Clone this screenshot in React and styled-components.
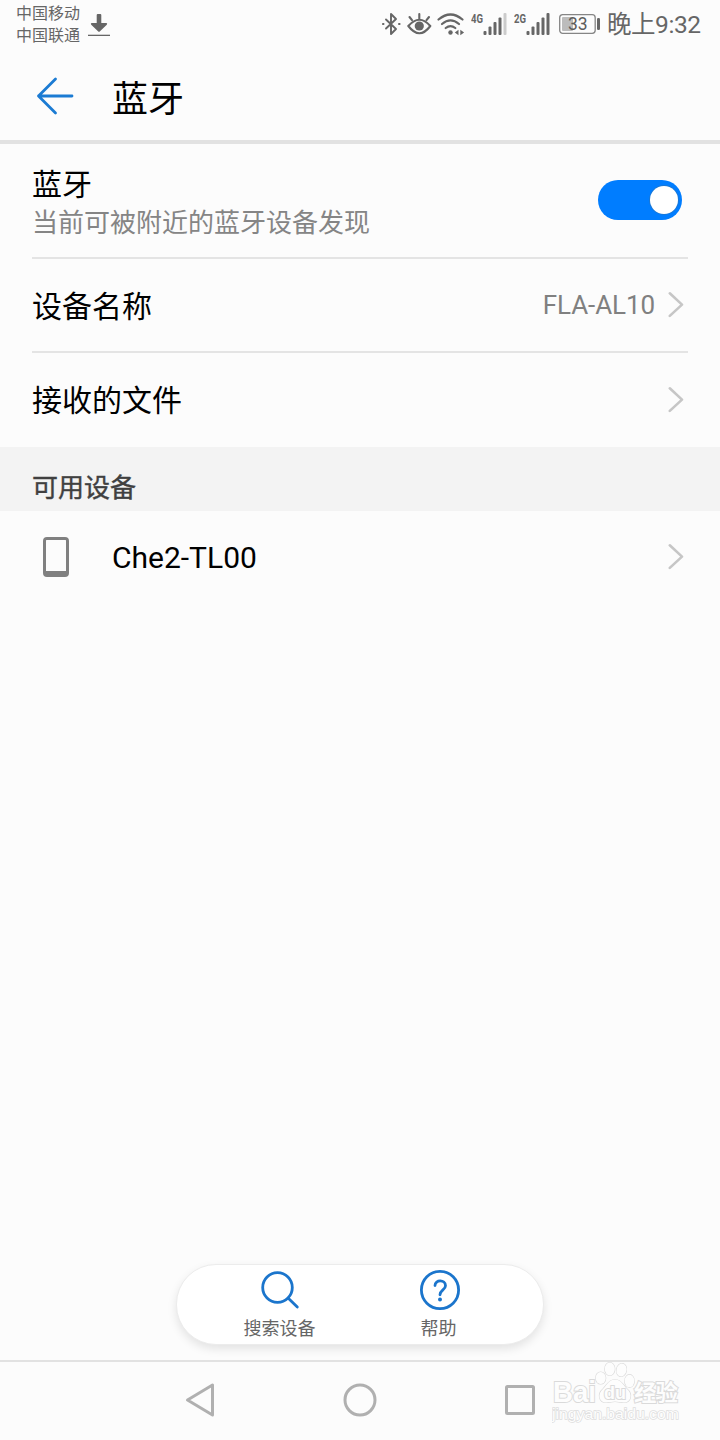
import styled, { createGlobalStyle } from "styled-components";

const GlobalStyle = createGlobalStyle`
  * {
    box-sizing: border-box;
  }
  body {
    margin: 0;
    background: #fcfcfc;
    font-family: Roboto, "Noto Sans CJK SC", sans-serif;
    color: #000;
  }
  svg {
    display: block;
    flex: none;
  }
`;

const Screen = styled.div`
  width: 720px;
  height: 1440px;
  display: flex;
  flex-direction: column;
  overflow: hidden;
  position: relative;
`;

const StatusBar = styled.div`
  height: 48px;
  padding-left: 16px;
  display: flex;
  align-items: center;
  color: #666;
`;

const Carriers = styled.div`
  width: 64px;
  margin-right: 8px;
  padding-top: 2px;
  font-size: 16px;
  line-height: 22px;
  white-space: nowrap;
`;

const StatusIcons = styled.div`
  width: 338px;
  margin-left: auto;
  display: flex;
  align-items: center;
`;

const Gap = styled.span`
  flex: none;
  width: ${(p) => p.$w}px;
`;

const Clock = styled.span`
  margin-left: 6px;
  padding-top: 2px;
  font-size: 24.5px;
  letter-spacing: -0.45px;
  line-height: 30px;
  white-space: nowrap;
`;

const Header = styled.header`
  height: 96px;
  padding: 4px 0 0 36px;
  border-bottom: 4px solid #e2e2e2;
  display: flex;
  align-items: center;
`;

const Title = styled.h1`
  margin: 8px 0 0 38px;
  font-size: 36px;
  font-weight: 400;
  line-height: 44px;
`;

const List = styled.div`
  padding: 0 32px;
`;

const Row = styled.div`
  height: ${(p) => p.$height || 94}px;
  border-bottom: ${(p) => (p.$last ? "none" : "2px solid #e4e4e4")};
  display: flex;
  align-items: center;
`;

const RowText = styled.div`
  flex: 1;
  padding-top: ${(p) => p.$top ?? 3}px;
  display: flex;
  flex-direction: column;
`;

const Label = styled.span`
  font-size: 30px;
  line-height: 38px;
`;

const Hint = styled.span`
  font-size: 26px;
  line-height: 38px;
  color: #858585;
`;

const Value = styled.span`
  margin-right: 13px;
  font-size: 26px;
  line-height: 32px;
  letter-spacing: -0.1px;
  color: #808080;
`;

const Switch = styled.div`
  width: 84px;
  height: 40px;
  margin: 0 6px 2px 0;
  padding: 0 4px;
  border-radius: 20px;
  background: #007dff;
  display: flex;
  align-items: center;
  justify-content: flex-end;
`;

const Knob = styled.span`
  width: 28px;
  height: 28px;
  border-radius: 50%;
  background: #fff;
  box-shadow: 0 0 0 1px #1a78d6;
`;

const SectionTitle = styled.h2`
  height: 64px;
  margin: 0;
  padding: 17px 32px 0;
  background: #f3f3f3;
  color: #404040;
  font-size: 26px;
  font-weight: 400;
  -webkit-text-stroke: 0.4px #404040;
  line-height: 48px;
`;

const DeviceIcon = styled.div`
  width: 80px;
  padding-left: 10px;
`;

const Toolbar = styled.div`
  width: 368px;
  height: 81px;
  margin: auto auto 15px;
  padding: 0 25px 0 23px;
  border-radius: 40px;
  border: 1px solid #ececec;
  background: #fff;
  box-shadow: 0 4px 10px rgba(0, 0, 0, 0.1);
  display: flex;
`;

const Tool = styled.div`
  flex: 1;
  padding-top: 5px;
  display: flex;
  flex-direction: column;
  align-items: center;
  font-size: 18px;
  line-height: 26px;
  color: #666;

  svg {
    margin-bottom: 6px;
  }
`;

const NavBar = styled.nav`
  height: 80px;
  padding: 0 160px 2px;
  border-top: 2px solid #e2e2e2;
  display: flex;
  align-items: center;
  justify-content: space-between;
`;

// sits over the navigation bar
const Watermark = styled.div`
  position: absolute;
  left: 552px;
  top: 1361px;
`;

const Chevron = () => (
  <svg width="20" height="30" viewBox="0 0 20 30" fill="none" stroke="#c6c6c6" strokeWidth="2.6" strokeLinecap="round" strokeLinejoin="round">
    <path d="M1.8 3.300L14 14.600 1.800 25.900" />
  </svg>
);

const Download = () => (
  <svg width="22" height="24" viewBox="0 0 22 24" fill="#666">
    <path d="M8.7 3q0-1 1-1h2.600q1 0 1 1v8h5q1.500.300.500 1.700l-6.800 6.500q-1 1-2 0l-6.800-6.500q-1-1.400.500-1.700h5z" />
    <path d="M0 22.700h22v1.300H0z" />
  </svg>
);

const Bluetooth = () => (
  <svg width="20" height="24" viewBox="0 0 20 24" fill="none" stroke="#666" strokeWidth="1.900" strokeLinejoin="round" strokeLinecap="round">
    <path d="M4 7.500l10 9.500L9 22V2l5 5L4 16.500" />
    <path d="M.9 12h.6M17 12h.6" strokeWidth="2" />
  </svg>
);

const Eye = () => (
  <svg width="25" height="24" viewBox="0 0 25 24" fill="none" stroke="#666" strokeWidth="2.100" strokeLinecap="round">
    <path d="M1.300 14Q12.500 1.500 23.300 14Q12.500 28.500 1.300 14z" strokeLinejoin="round" />
    <path d="M2.500 5l2.500 3.200M12.300 2v4.500M22 5l-2.500 3.200" />
    <circle cx="12.300" cy="14" r="4.600" fill="#666" stroke="none" />
  </svg>
);

const Wifi = () => (
  <svg width="28" height="24" viewBox="0 0 28 24" fill="none" stroke="#666" strokeWidth="2.200" strokeLinecap="round">
    <path d="M1.500 7.500Q13.500-2.500 25.500 7.500M5 12Q13.500 4.800 22 12M8.700 16Q13.500 12.200 18.300 16" />
    <circle cx="13.500" cy="20.500" r="2.200" fill="#666" stroke="none" />
    <path d="M21.500 17.700v5.600l-3.700-2.800zM23.300 17.700v5.600l3.800-2.800z" fill="#666" stroke="none" />
  </svg>
);

const Signal = ({ network, weak }) => (
  <svg width="36" height="32" viewBox="0 -4 36 32" fill="#666">
    <text x="0" y="10.500" fontSize="13.500" fontWeight="700" textLength="12" lengthAdjust="spacingAndGlyphs">
      {network}
    </text>
    <rect x="12.500" y="19" width="3" height="4" rx="1" />
    <rect x="17.500" y="14.500" width="3" height="8.500" rx="1" />
    <rect x="22.500" y="10" width="3" height="13" rx="1" />
    <rect x="27.500" y="5.500" width="3" height="17.500" rx="1" />
    <rect x="32.500" y="1" width="3" height="22" rx="1" fill={weak ? "#ccc" : "#666"} />
  </svg>
);

const Battery = () => (
  <svg width="42" height="24" viewBox="0 0 42 24">
    <rect x="0.700" y="2.700" width="35.500" height="18.600" rx="3" fill="none" stroke="#858585" strokeWidth="1.300" />
    <rect x="3" y="5" width="11" height="14" rx="1" fill="#bcbcbc" />
    <rect x="38" y="6" width="3" height="12" rx="1.300" fill="#666" />
    <text x="18.800" y="18" fontSize="17.500" textAnchor="middle" fill="#5c5c5c">33</text>
  </svg>
);

const BackArrow = () => (
  <svg width="38" height="38" viewBox="0 0 38 38" fill="none" stroke="#1b7bd3" strokeWidth="2.800" strokeLinecap="round" strokeLinejoin="round">
    <path d="M19.500 2L2.500 19l17 17M2.500 19H36" />
  </svg>
);

const Phone = () => (
  <svg width="28" height="40" viewBox="0 0 28 40">
    <path fill="#808080" fillRule="evenodd" d="M5 0h18q4 0 4 4v32q0 4-4 4H5q-4 0-4-4V4q0-4 4-4zM4.500 3Q4 3 4 3.500V34h20V3.500q0-.5-.5-.5z" />
  </svg>
);

const Search = () => (
  <svg width="40" height="40" viewBox="0 0 40 40" fill="none" stroke="#1b75cc" strokeWidth="2.800" strokeLinecap="round">
    <circle cx="17.500" cy="17.500" r="14.800" />
    <path d="M28.300 28.300l9 8.700" />
  </svg>
);

const Help = () => (
  <svg width="40" height="40" viewBox="-1 0 40 40" fill="none" stroke="#1b75cc" strokeWidth="2.800" strokeLinecap="round" overflow="visible">
    <circle cx="20" cy="20" r="18.600" />
    <path d="M15 15.500c0-6 10.500-6.200 10.500.3 0 4-5.500 4.300-5.500 9" />
    <circle cx="20" cy="29.500" r="2" fill="#1b75cc" stroke="none" />
  </svg>
);

const NavIcon = ({ children }) => (
  <svg width="80" height="40" viewBox="0 0 80 40" fill="none" stroke="#b0b0b0" strokeWidth="3" strokeLinejoin="round">
    {children}
  </svg>
);

const BaiduMark = () => (
  <svg width="134" height="66" viewBox="0 0 134 66" fill="#fdfdfd" stroke="#dadada" strokeWidth="1.200">
    <g fontFamily="Liberation Sans, sans-serif" fontWeight="700" paintOrder="stroke">
      <text x="1" y="41" fontSize="30" strokeWidth="2" textLength="43" lengthAdjust="spacingAndGlyphs">Bai</text>
      <ellipse cx="48.700" cy="17" rx="5" ry="6" />
      <ellipse cx="57.800" cy="8" rx="5" ry="6.500" />
      <ellipse cx="69.500" cy="9" rx="5" ry="6.500" transform="rotate(12 69.500 9)" />
      <ellipse cx="77.500" cy="20" rx="4.800" ry="6.300" />
      <path d="M63 18.500C69 18.500 71 24 75 28C81 33 79 41.500 72 41.500C68 41.500 66 40.500 63 40.500C60 40.500 58 41.500 54 41.500C47 41.500 45 33 51 28C55 24 57 18.500 63 18.500z" />
      <text x="52" y="38" fontSize="19" strokeWidth="2" textLength="22" lengthAdjust="spacingAndGlyphs">du</text>
      <text x="82" y="40" fontSize="22.500" strokeWidth="2" fontFamily="Noto Sans CJK SC, sans-serif" textLength="44">经验</text>
    </g>
    <text x="0" y="58" fontSize="14.500" strokeWidth="1.400" paintOrder="stroke" stroke="#dedede" fontFamily="Liberation Sans, sans-serif" textLength="127" lengthAdjust="spacingAndGlyphs">jingyan.baidu.com</text>
  </svg>
);

export default function App() {
  return (
    <Screen>
      <GlobalStyle />
      <StatusBar>
        <Carriers>
          <div>中国移动</div>
          <div>中国联通</div>
        </Carriers>
        <Download />
        <StatusIcons>
          <Bluetooth />
          <Gap $w={5} />
          <Eye />
          <Gap $w={5} />
          <Wifi />
          <Gap $w={6} />
          <Signal network="4G" weak />
          <Gap $w={7} />
          <Signal network="2G" />
          <Gap $w={9} />
          <Battery />
          <Clock>晚上9:32</Clock>
        </StatusIcons>
      </StatusBar>

      <Header>
        <BackArrow />
        <Title>蓝牙</Title>
      </Header>

      <List>
        <Row $height={115}>
          <RowText $top={6}>
            <Label>蓝牙</Label>
            <Hint>当前可被附近的蓝牙设备发现</Hint>
          </RowText>
          <Switch>
            <Knob />
          </Switch>
        </Row>
        <Row>
          <RowText $top={4}>
            <Label>设备名称</Label>
          </RowText>
          <Value>FLA-AL10</Value>
          <Chevron />
        </Row>
        <Row $last>
          <RowText $top={2}>
            <Label>接收的文件</Label>
          </RowText>
          <Chevron />
        </Row>
      </List>

      <SectionTitle>可用设备</SectionTitle>
      <List>
        <Row $height={92} $last>
          <DeviceIcon>
            <Phone />
          </DeviceIcon>
          <RowText $top={2}>
            <Label>Che2-TL00</Label>
          </RowText>
          <Chevron />
        </Row>
      </List>

      <Toolbar>
        <Tool>
          <Search />
          搜索设备
        </Tool>
        <Tool>
          <Help />
          帮助
        </Tool>
      </Toolbar>

      <NavBar>
        <NavIcon>
          <path d="M52.500 5v30L27.500 20z" />
        </NavIcon>
        <NavIcon>
          <circle cx="40" cy="20" r="15" />
        </NavIcon>
        <NavIcon>
          <rect x="26.500" y="6.500" width="27" height="27" rx="1" />
        </NavIcon>
      </NavBar>

      <Watermark>
        <BaiduMark />
      </Watermark>
    </Screen>
  );
}
